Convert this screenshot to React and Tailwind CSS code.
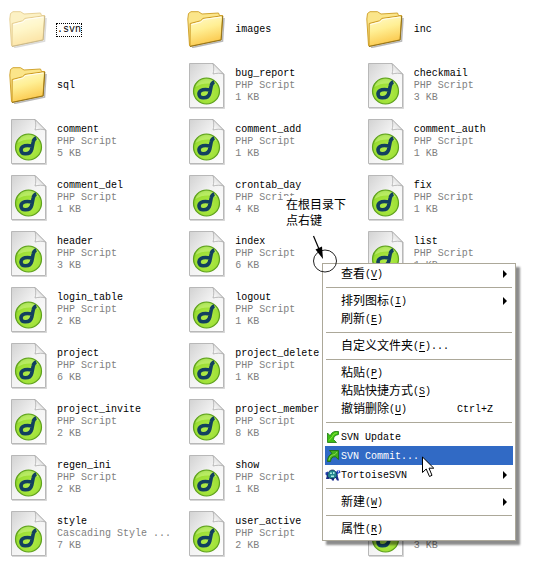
import clsx from 'clsx';

const files = [
  { kind: 'folder', name: '.svn', faded: true, focused: true },
  { kind: 'folder', name: 'images' },
  { kind: 'folder', name: 'inc' },
  { kind: 'folder', name: 'sql' },
  { kind: 'php', name: 'bug_report', size: '1 KB' },
  { kind: 'php', name: 'checkmail', size: '3 KB' },
  { kind: 'php', name: 'comment', size: '5 KB' },
  { kind: 'php', name: 'comment_add', size: '1 KB' },
  { kind: 'php', name: 'comment_auth', size: '1 KB' },
  { kind: 'php', name: 'comment_del', size: '1 KB' },
  { kind: 'php', name: 'crontab_day', size: '4 KB' },
  { kind: 'php', name: 'fix', size: '1 KB' },
  { kind: 'php', name: 'header', size: '3 KB' },
  { kind: 'php', name: 'index', size: '6 KB' },
  { kind: 'php', name: 'list', size: '1 KB' },
  { kind: 'php', name: 'login_table', size: '2 KB' },
  { kind: 'php', name: 'logout', size: '1 KB' },
  { kind: 'blank' },
  { kind: 'php', name: 'project', size: '6 KB' },
  { kind: 'php', name: 'project_delete', size: '1 KB' },
  { kind: 'blank' },
  { kind: 'php', name: 'project_invite', size: '2 KB' },
  { kind: 'php', name: 'project_member', size: '8 KB' },
  { kind: 'blank' },
  { kind: 'php', name: 'regen_ini', size: '2 KB' },
  { kind: 'php', name: 'show', size: '1 KB' },
  { kind: 'blank' },
  { kind: 'css', name: 'style', size: '7 KB' },
  { kind: 'php', name: 'user_active', size: '2 KB' },
  { kind: 'other', size: '3 KB' },
];

const typeLabels = {
  php: 'PHP Script',
  css: 'Cascading Style ...',
};

const menuGroups = [
  [{ label: '查看', accessKey: 'V', submenu: true }],
  [
    { label: '排列图标', accessKey: 'I', submenu: true },
    { label: '刷新', accessKey: 'E' },
  ],
  [{ label: '自定义文件夹', accessKey: 'F', suffix: '...' }],
  [
    { label: '粘贴', accessKey: 'P' },
    { label: '粘贴快捷方式', accessKey: 'S' },
    { label: '撤销删除', accessKey: 'U', shortcut: 'Ctrl+Z' },
  ],
  [
    { text: 'SVN Update', icon: UpdateIcon },
    { text: 'SVN Commit...', icon: CommitIcon, active: true },
    { text: 'TortoiseSVN', icon: TortoiseIcon, submenu: true },
  ],
  [{ label: '新建', accessKey: 'W', submenu: true }],
  [{ label: '属性', accessKey: 'R' }],
];

function Gradients() {
  return (
    <svg className="absolute size-0" aria-hidden="true">
      <defs>
        <linearGradient id="folderFront" x1="0" y1="0" x2="0.3" y2="1">
          <stop offset="0" stopColor="#fffbd0" />
          <stop offset="0.5" stopColor="#ffef94" />
          <stop offset="1" stopColor="#fbc94e" />
        </linearGradient>
        <linearGradient id="paper" x1="0" y1="0" x2="1" y2="1">
          <stop offset="0" stopColor="#d2d2d2" />
          <stop offset="0.45" stopColor="#f2f2f2" />
          <stop offset="1" stopColor="#ffffff" />
        </linearGradient>
        <linearGradient id="fold" x1="0" y1="1" x2="1" y2="0">
          <stop offset="0" stopColor="#ffffff" />
          <stop offset="0.5" stopColor="#e4e4e4" />
          <stop offset="1" stopColor="#8c8c8c" />
        </linearGradient>
        <radialGradient id="disc" cx="0.55" cy="0.6" r="0.6">
          <stop offset="0" stopColor="#b2ec4a" />
          <stop offset="0.8" stopColor="#9ade32" />
          <stop offset="1" stopColor="#7cc824" />
        </radialGradient>
      </defs>
    </svg>
  );
}

function FolderIcon({ faded }) {
  return (
    <svg
      viewBox="0 0 38 38"
      className={clsx('h-[38px] w-[38px] shrink-0', faded && 'opacity-50')}
    >
      <path d="M5 37.5L35.5 31L37 8" fill="none" stroke="#8a8a8a" strokeOpacity="0.6" strokeWidth="1.6" />
      <path
        d="M2.5 35.5L0.8 9L1.5 3.5L4 1.7H11.5L15 4L31.5 3L32.5 5.5L35.5 5.5L34 28Z"
        fill="#fbe58a"
        stroke="#d2a531"
      />
      <path
        d="M3 36.3L3.2 13.5L13.5 10.8L16 8.4L35.6 5.7L34 29.8Z"
        fill="url(#folderFront)"
        stroke="#cc9a22"
        strokeLinejoin="round"
      />
      <path d="M3 36.5L34.2 30L35.8 6" fill="none" stroke="#94741c" />
      <path d="M4.3 14.6L14.2 11.9L16.7 9.5L34 7" fill="none" stroke="#fffdf0" />
    </svg>
  );
}

function ScriptIcon() {
  return (
    <svg viewBox="0 0 38 48" className="h-[48px] w-[38px] shrink-0">
      <path d="M3 47.5H37.5V13" fill="none" stroke="#9b9b9b" strokeOpacity="0.4" />
      <path d="M2.5 2.5H26L36.5 13V46.5H2.5Z" fill="url(#paper)" stroke="#b8b8b8" />
      <path d="M26 2.5C27 6 27 10 26 13C30 12 33 12 36.5 13Z" fill="url(#fold)" stroke="#a4a4a4" strokeWidth="0.7" />
      <circle cx="19.5" cy="30" r="13" fill="url(#disc)" stroke="#5fa01e" strokeWidth="1.2" />
      <path d="M8.5 26A11.5 11.5 0 0 1 30 24.500C24 21.500 15 22 8.5 26Z" fill="#d4f890" fillOpacity="0.5" />
      <path
        d="M27.3 21C25.8 21.5 24.6 22.500 24.2 25L22.8 32C22 35.500 19.500 37 16 36.800C11.500 36.500 10.800 31.500 14 29.500C16.500 28 20 28.500 23.300 29"
        fill="none"
        stroke="#12405f"
        strokeWidth="3.6"
      />
    </svg>
  );
}

function UpdateIcon() {
  return (
    <svg viewBox="0 0 12 12" className="ml-[2px] h-[12px] w-[12px]">
      <path
        d="M0.5 2V11.5H9.5L6.5 8.5C6.5 6 8 4 11.5 3.5V0.5H8C5 1 4 3 3.2 4.8Z"
        fill="#3fbf14"
        stroke="#1c7a0c"
        strokeWidth="0.8"
      />
      <path d="M2 9.5L5.5 5.5C6 3.5 7.5 2.2 10 2" fill="none" stroke="#8dea3c" />
    </svg>
  );
}

function CommitIcon() {
  return (
    <svg viewBox="0 0 12 12" className="ml-[2px] h-[12px] w-[12px]">
      <path
        d="M2.5 0.5H11.5V9.5L8.5 6.8C5.5 6.5 4 8 3.5 11.5H0.5C0.5 7.5 2 5 5 3.5Z"
        fill="#3fae1c"
        stroke="#1c6a0c"
        strokeWidth="0.8"
      />
      <path d="M2 10C2.5 6.5 4.5 5 8 4.5L10 2" fill="none" stroke="#8dde4c" />
    </svg>
  );
}

function TortoiseIcon() {
  return (
    <svg viewBox="0 0 16 12" className="h-[12px] w-[16px]">
      <path d="M2 6L1 10H4L5 8ZM10 8L12 11.5H14L13 8ZM6 9L7 11.5H9V9Z" fill="#1b2c8c" />
      <path d="M0.5 3.5L3 2.5L4 6L2 7L0.5 5.5Z" fill="#2440b0" />
      <path d="M10 5L12 1.5H15L15.5 3.5L12.5 5L13 8L10 8.5Z" fill="#2a49c4" />
      <path d="M2.5 7.5C2.5 3 5 1 7.5 1C10 1 12 3.5 12 7.5L9 9.5H5Z" fill="#23858e" stroke="#10285c" strokeWidth="0.8" />
      <path d="M5 3.5H7V5H5ZM8 3H9.5V5H8ZM6 6.5H9V8H6Z" fill="#a6e8e0" />
      <path d="M13 2.3H14V3.3H13Z" fill="#fff" />
    </svg>
  );
}

function FileTile({ file }) {
  if (file.kind === 'blank') return <li className="h-[56px]" />;

  const isFolder = file.kind === 'folder';
  return (
    <li className="flex h-[56px] items-center gap-[10px] pl-[9px]">
      {isFolder ? <FolderIcon faded={file.faded} /> : <ScriptIcon />}
      <div className="min-w-0 whitespace-nowrap pt-[2px] text-[10px] leading-[12px] text-[#808080]">
        <p
          className={clsx(
            'h-[12px] w-fit text-black',
            file.focused && 'outline-1 outline-dotted outline-black',
          )}
        >
          {file.name}
        </p>
        {!isFolder && <p className="h-[12px]">{typeLabels[file.kind]}</p>}
        {file.size && <p>{file.size}</p>}
      </div>
    </li>
  );
}

function MenuItem({ item }) {
  const Icon = item.icon;
  return (
    <button
      type="button"
      role="menuitem"
      className={clsx(
        'flex w-full items-center whitespace-nowrap text-left',
        Icon ? 'h-[19px]' : 'h-[18px]',
        item.active ? 'bg-[#316ac5] text-white' : 'text-black',
      )}
    >
      <span className="flex w-[16px] shrink-0">{Icon && <Icon />}</span>
      {item.label && <span className="pt-[2px] text-[12px] leading-[18px]">{item.label}</span>}
      <span className="flex-1 pt-[2px] text-[10px] leading-[18px]">
        {item.text}
        {item.accessKey && (
          <>
            (<u className="underline-offset-2">{item.accessKey}</u>){item.suffix}
          </>
        )}
      </span>
      {item.shortcut && (
        <span className="pr-[20px] pt-[2px] text-[10px] leading-[18px]">{item.shortcut}</span>
      )}
      {item.submenu && (
        <svg viewBox="0 0 4 8" className="mr-[6px] h-[8px] w-[4px]">
          <path d="M0 0L4 4L0 8Z" fill="#000" />
        </svg>
      )}
    </button>
  );
}

function ContextMenu() {
  return (
    <div
      role="menu"
      className="absolute left-[322px] top-[263px] w-[194px] border border-[#aca899] bg-white px-[2px] pb-[2px] pt-px shadow-[4px_4px_2px_rgba(0,0,0,0.45)]"
    >
      {menuGroups.map((group, index) => (
        <div key={index}>
          {index > 0 && <hr className="mx-px my-[4px] border-[#aca899]" />}
          {group.map((item) => (
            <MenuItem key={item.label || item.text} item={item} />
          ))}
        </div>
      ))}
    </div>
  );
}

function Callout() {
  return (
    <>
      <p className="absolute left-[283px] top-[196px] bg-white px-[3px] pt-[2px] text-[12px] leading-[16px] text-black">
        在根目录下
        <br />
        点右键
      </p>
      <svg viewBox="0 0 28 40" className="absolute left-[311px] top-[234px] h-[40px] w-[28px]">
        <ellipse cx="14" cy="27" rx="11.5" ry="11" fill="none" stroke="#222" />
        <path d="M2.5 2L8 15" stroke="#000" strokeWidth="1.2" />
        <path d="M12 25L4.5 15.5L11 12.5Z" fill="#000" />
      </svg>
    </>
  );
}

function Pointer() {
  return (
    <svg viewBox="0 0 13 22" className="absolute left-[422px] top-[456px] h-[22px] w-[13px]">
      <path
        d="M0.5 1V16.5L4.2 13L7.5 20.5L10 19.3L7 12.2H11.8Z"
        fill="#fff"
        stroke="#000"
      />
    </svg>
  );
}

export default function App() {
  return (
    <main className="relative min-h-screen overflow-hidden bg-white pt-px font-['Liberation_Mono','Noto_Sans_CJK_SC',monospace]">
      <Gradients />
      <ul className="grid grid-cols-3">
        {files.map((file, index) => (
          <FileTile key={index} file={file} />
        ))}
      </ul>
      <ContextMenu />
      <Callout />
      <Pointer />
    </main>
  );
}
